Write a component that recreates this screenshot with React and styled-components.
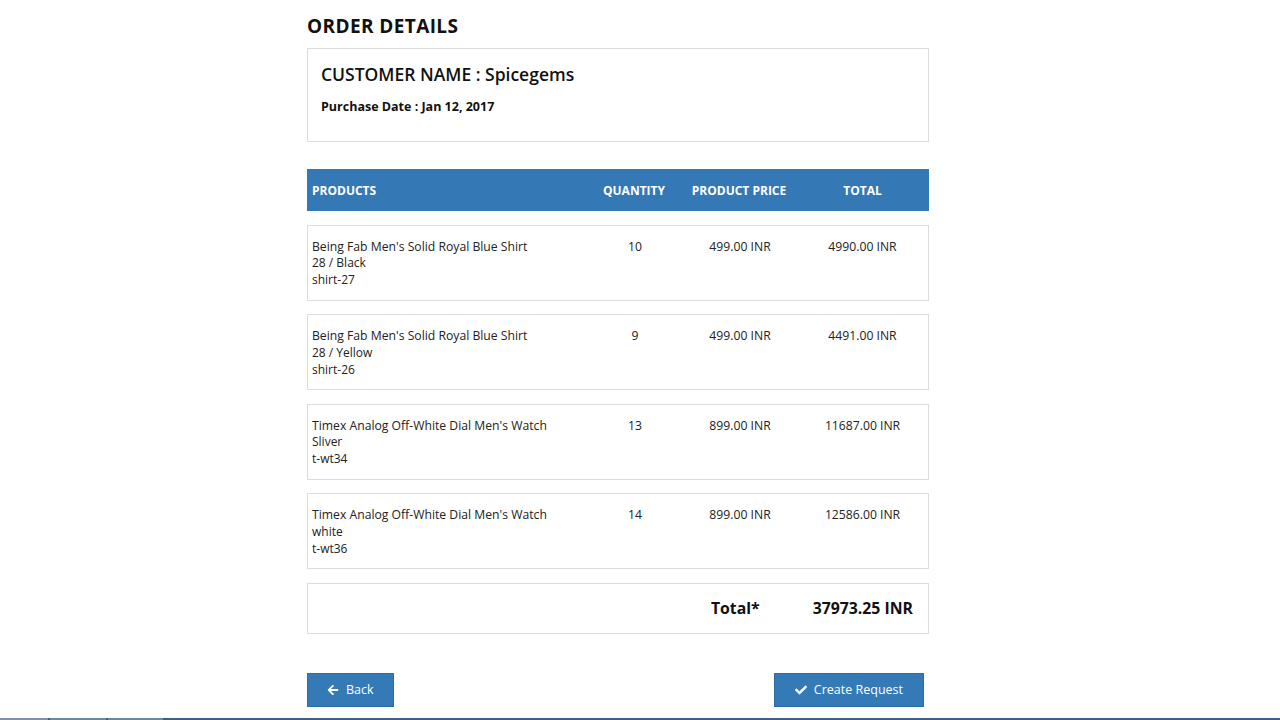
import React from 'react';
import styled, { createGlobalStyle } from 'styled-components';
import { FaArrowLeft, FaCheck } from 'react-icons/fa';

const GlobalStyle = createGlobalStyle`
  html, body {
    margin: 0;
    padding: 0;
    background: #fff;
  }
  body {
    font-family: "Open Sans", "Liberation Sans", Arial, sans-serif;
    color: #222;
  }
  * {
    box-sizing: border-box;
  }
`;

const Page = styled.div`
  min-height: 100vh;
  display: flex;
  flex-direction: column;
`;

const Container = styled.div`
  width: 622px;
  margin-left: calc(50% - 333px);
  padding-top: 14px;
`;

const Title = styled.h2`
  margin: 0 0 10px;
  font-size: 19px;
  font-weight: 700;
  letter-spacing: 0.4px;
  line-height: 24px;
  color: #111;
`;

const CustomerCard = styled.div`
  border: 1px solid #dcdcdc;
  height: 94px;
  padding: 13px 13px;
`;

const CustomerName = styled.h3`
  margin: 0;
  font-size: 17.5px;
  font-weight: 600;
  line-height: 24px;
  color: #111;
`;

const PurchaseDate = styled.div`
  margin-top: 12px;
  font-size: 12.5px;
  font-weight: 700;
  color: #111;
`;

const cols = '279px 96px 114px 1fr';

const HeaderRow = styled.div`
  margin-top: 27px;
  height: 42px;
  background: #3478b6;
  display: grid;
  grid-template-columns: ${cols};
  align-items: center;
  color: #fff;
  font-size: 12px;
  font-weight: 700;
`;

const HeadCell = styled.div`
  text-align: ${p => (p.$left ? 'left' : 'center')};
  padding-left: ${p => (p.$left ? '5px' : '0')};
`;

const ItemRow = styled.div`
  margin-top: 13.5px;
  height: 76px;
  border: 1px solid #dcdcdc;
  display: grid;
  grid-template-columns: ${cols};
  align-items: start;
  padding-top: 13px;
  color: #222;
`;

const ProductCell = styled.div`
  padding-left: 4px;
  font-size: 12px;
  line-height: 16.8px;
`;

const ProductName = styled.div`
  font-size: 12.2px;
`;

const Cell = styled.div`
  text-align: center;
  font-size: 12.2px;
  line-height: 16.8px;
`;

const TotalBox = styled.div`
  margin-top: 13.5px;
  height: 51px;
  border: 1px solid #dcdcdc;
  display: flex;
  align-items: center;
  justify-content: flex-end;
  padding-right: 15px;
  font-size: 15.8px;
  font-weight: 700;
  color: #111;
  gap: 53px;
`;

const Actions = styled.div`
  margin-top: 39px;
  display: flex;
  justify-content: space-between;
  padding-right: 5px;
`;

const Button = styled.button`
  height: 34px;
  padding: 0 ${p => p.$pad};
  background: #337ab7;
  border: 1px solid #2e6da4;
  color: #fff;
  font-family: inherit;
  font-size: 12.5px;
  display: inline-flex;
  align-items: center;
  gap: 7px;
  cursor: pointer;

  svg {
    width: 12px;
    height: 12px;
  }
`;

const BottomStrip = styled.div`
  margin-top: auto;
  height: 2px;
  background: #3d5f86;
  display: flex;
`;

const StripTab = styled.div`
  width: ${p => p.$w}px;
  height: 2px;
  background: ${p => p.$c};
  margin-right: 2px;
`;

const items = [
  { name: "Being Fab Men's Solid Royal Blue Shirt", variant: '28 / Black', sku: 'shirt-27', qty: 10, price: '499.00 INR', total: '4990.00 INR' },
  { name: "Being Fab Men's Solid Royal Blue Shirt", variant: '28 / Yellow', sku: 'shirt-26', qty: 9, price: '499.00 INR', total: '4491.00 INR' },
  { name: "Timex Analog Off-White Dial Men's Watch", variant: 'Sliver', sku: 't-wt34', qty: 13, price: '899.00 INR', total: '11687.00 INR' },
  { name: "Timex Analog Off-White Dial Men's Watch", variant: 'white', sku: 't-wt36', qty: 14, price: '899.00 INR', total: '12586.00 INR' },
];

export default function App() {
  return (
    <Page>
      <GlobalStyle />
      <Container>
        <Title>ORDER DETAILS</Title>
        <CustomerCard>
          <CustomerName>CUSTOMER NAME : Spicegems</CustomerName>
          <PurchaseDate>Purchase Date : Jan 12, 2017</PurchaseDate>
        </CustomerCard>

        <HeaderRow>
          <HeadCell $left>PRODUCTS</HeadCell>
          <HeadCell>QUANTITY</HeadCell>
          <HeadCell>PRODUCT PRICE</HeadCell>
          <HeadCell>TOTAL</HeadCell>
        </HeaderRow>

        {items.map((it, i) => (
          <ItemRow key={i}>
            <ProductCell>
              <ProductName>{it.name}</ProductName>
              <div>{it.variant}</div>
              <div>{it.sku}</div>
            </ProductCell>
            <Cell>{it.qty}</Cell>
            <Cell>{it.price}</Cell>
            <Cell>{it.total}</Cell>
          </ItemRow>
        ))}

        <TotalBox>
          <span>Total*</span>
          <span>37973.25 INR</span>
        </TotalBox>

        <Actions>
          <Button $pad="19px">
            <FaArrowLeft /> Back
          </Button>
          <Button $pad="20px">
            <FaCheck /> Create Request
          </Button>
        </Actions>
      </Container>
      <BottomStrip>
        <StripTab $w={48} $c="#7d93ad" />
        <StripTab $w={56} $c="#6f87a4" />
        <StripTab $w={55} $c="#6f87a4" />
      </BottomStrip>
    </Page>
  );
}
